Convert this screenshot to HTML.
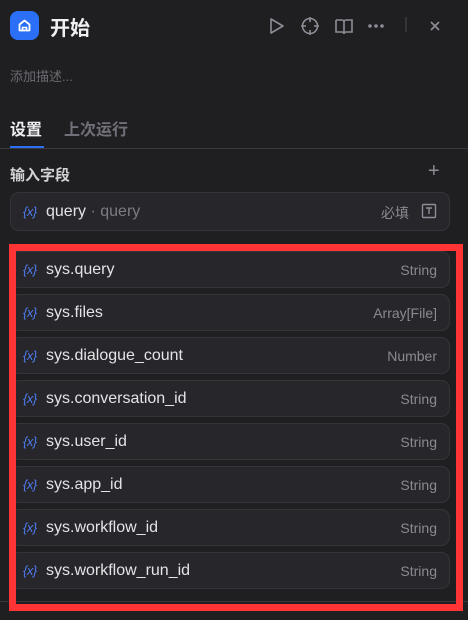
<!DOCTYPE html>
<html><head><meta charset="utf-8"><style>
*{margin:0;padding:0;box-sizing:border-box}
body{width:468px;height:620px;background:#1f1f22;font-family:"Liberation Sans","Noto Sans CJK SC",sans-serif;position:relative;overflow:hidden;color:#e6e6e9}
.abs{position:absolute}
.row{position:absolute;left:10px;width:440px;height:37px;background:#26262b;border:1px solid #34343a;border-radius:9px}
.row .x{position:absolute;left:12px;top:10px;color:#4f7cf0;font-size:13px;font-style:italic;letter-spacing:-0.5px}
.row .n{position:absolute;left:35px;top:9px;font-size:16px;color:#e4e4e7}
.row .t{position:absolute;right:12px;top:10px;font-size:14px;color:#8a8a92}
</style></head><body>
<div class="abs" style="left:10px;top:11px;width:29px;height:29px;background:#2a6ff5;border-radius:8px"></div>
<svg class="abs" style="left:16px;top:17px" width="17" height="17" viewBox="0 0 17 17"><path d="M3.5 7.5 L8.5 3.5 L13.5 7.5 V13.5 H3.5 Z" fill="none" stroke="#fff" stroke-width="1.8" stroke-linejoin="round"/><path d="M6.5 13 V10.5 H10.5 V13" fill="none" stroke="#fff" stroke-width="1.6"/></svg>
<div class="abs" style="left:50px;top:12px;font-size:20px;font-weight:bold;color:#f0f0f2">开始</div>
<svg class="abs" style="left:265px;top:14px" width="190" height="24" viewBox="0 0 190 24" fill="none" stroke="#8d8d96" stroke-width="1.6">
<path d="M6 5 L18 12 L6 19 Z" stroke-linejoin="round"/>
<circle cx="45" cy="12" r="7.5"/><path d="M45 3v5M45 16v5M36 12h5M49 12h5"/>
<path d="M71 6h6a2 2 0 0 1 2 2v12 M79 8a2 2 0 0 1 2-2h6v12h-6a2 2 0 0 0-2 2 M71 6v12h6a2 2 0 0 1 2 2"/>
<circle cx="105" cy="12" r="1" fill="#8d8d96"/><circle cx="111" cy="12" r="1" fill="#8d8d96"/><circle cx="117" cy="12" r="1" fill="#8d8d96"/>
<path d="M141 3v15" stroke="#3a3a40"/>
<path d="M166 8l8 8M174 8l-8 8"/>
</svg>
<div class="abs" style="left:10px;top:66px;font-size:13px;color:#6b6b72">添加描述...</div>
<div class="abs" style="left:10px;top:116px;font-size:16px;font-weight:bold;color:#f0f0f2">设置</div>
<div class="abs" style="left:64px;top:116px;font-size:16px;font-weight:bold;color:#707078">上次运行</div>
<div class="abs" style="left:0;top:148px;width:468px;height:1px;background:#38383e"></div>
<div class="abs" style="left:10px;top:146px;width:34px;height:2px;background:#2a6ff5"></div>
<div class="abs" style="left:10px;top:164px;font-size:15px;font-weight:bold;color:#d4d4d8">输入字段</div>
<div class="abs" style="left:428px;top:160px;font-size:20px;color:#8d8d96">+</div>
<div class="row" style="top:192px;height:39px"><span class="x" style="top:11px">{x}</span><span class="n" style="top:10px">query <span style="color:#7c7c84">· query</span></span><span class="t" style="right:40px;top:10px;font-size:14px">必填</span>
<svg class="abs" style="right:12px;top:10px" width="16" height="16" viewBox="0 0 16 16" fill="none" stroke="#8d8d96" stroke-width="1.4"><rect x="1.5" y="1.5" width="13" height="13" rx="1"/><path d="M5 5h6M8 5v6"/></svg></div>
<div class="row" style="top:251px"><span class="x">{x}</span><span class="n">sys.query</span><span class="t">String</span></div>
<div class="row" style="top:294px"><span class="x">{x}</span><span class="n">sys.files</span><span class="t">Array[File]</span></div>
<div class="row" style="top:337px"><span class="x">{x}</span><span class="n">sys.dialogue_count</span><span class="t">Number</span></div>
<div class="row" style="top:380px"><span class="x">{x}</span><span class="n">sys.conversation_id</span><span class="t">String</span></div>
<div class="row" style="top:423px"><span class="x">{x}</span><span class="n">sys.user_id</span><span class="t">String</span></div>
<div class="row" style="top:466px"><span class="x">{x}</span><span class="n">sys.app_id</span><span class="t">String</span></div>
<div class="row" style="top:509px"><span class="x">{x}</span><span class="n">sys.workflow_id</span><span class="t">String</span></div>
<div class="row" style="top:552px"><span class="x">{x}</span><span class="n">sys.workflow_run_id</span><span class="t">String</span></div>
<div class="abs" style="left:0;top:601px;width:468px;height:1px;background:#38383e"></div>
<div class="abs" style="left:9px;top:244px;width:454px;height:367px;border:7px solid #ff3434"></div>
</body></html>
